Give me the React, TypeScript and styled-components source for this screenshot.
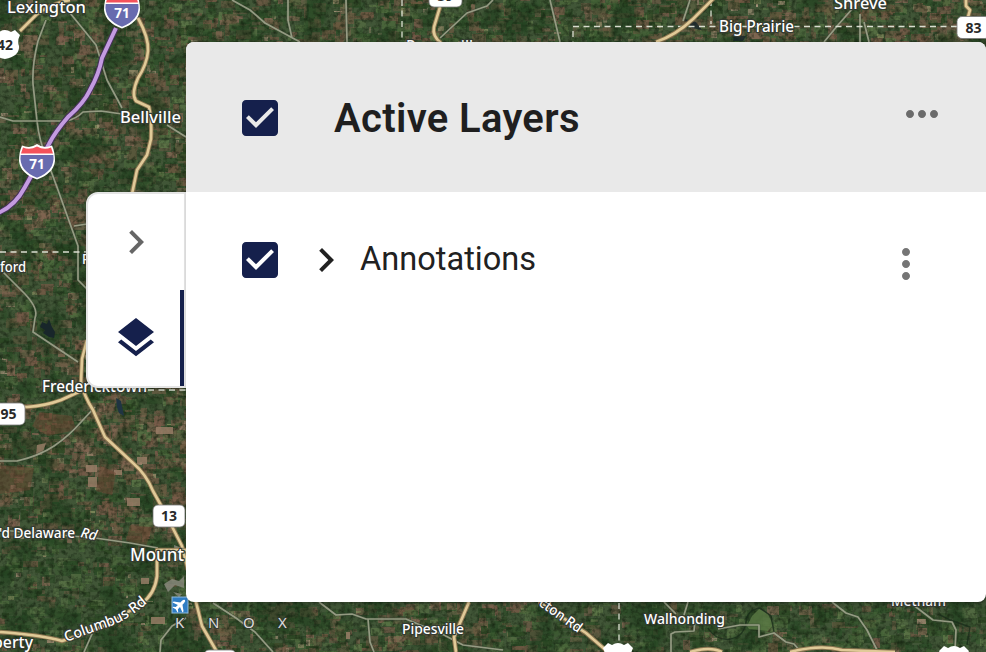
import React from "react";
import styled, { createGlobalStyle } from "styled-components";

const GlobalStyle = createGlobalStyle`
  *, *::before, *::after { box-sizing: border-box; }
  body { margin: 0; overflow: hidden; font-family: Roboto, sans-serif; }
`;

const navy = "#15204c";

const Screen = styled.main`
  position: relative;
  width: 986px;
  height: 652px;
  overflow: hidden;
  background: #30452a;
`;

const MapCanvas = styled.svg`
  position: absolute;
  inset: 0;
  display: block;
  font-family: "Noto Sans", "Open Sans", sans-serif;
`;

const Overlay = styled.div`
  position: relative;
  display: flex;
  align-items: flex-start;
  padding: 42px 0 0 86px;
`;

const Rail = styled.nav`
  display: flex;
  flex-direction: column;
  width: 100px;
  height: 196px;
  margin-top: 150px;
  background: #fff;
  border: 2px solid #e4e4e4;
  border-radius: 12px 0 0 12px;
  box-shadow: 0 1px 3px rgba(0, 0, 0, 0.25);
`;

const RailButton = styled.button<{ $active?: boolean }>`
  display: flex;
  align-items: center;
  justify-content: center;
  height: 96px;
  padding: 0 0 0 ${(p) => (p.$active ? 4 : 0)}px;
  border: 0;
  border-right: ${(p) => (p.$active ? `4px solid ${navy}` : "0")};
  background: transparent;
  color: ${(p) => (p.$active ? navy : "#666")};
`;

const Panel = styled.section`
  width: 800px;
  height: 560px;
  overflow: hidden;
  background: #fff;
  border-radius: 8px;
  box-shadow: 2px 1px 4px rgba(0, 0, 0, 0.35);
`;

const PanelHeader = styled.header`
  display: flex;
  align-items: center;
  height: 150px;
  padding: 0 40px 0 50px;
  background: #e9e9e9;
`;

const Title = styled.h1`
  flex: 1;
  margin: 4px 0 0 50px;
  font-size: 40px;
  line-height: 48px;
  font-weight: 600;
  letter-spacing: 0.33px;
  color: #1f1f1f;
`;

const LayerRow = styled.div`
  display: flex;
  align-items: flex-start;
  padding: 44px 56px 0 50px;
`;

const LayerName = styled.span`
  flex: 1;
  margin-left: 10px;
  font-size: 32.6px;
  line-height: 46px;
  color: #212121;
`;

const IconButton = styled.button<{ $color: string; $left?: number; $shift?: number }>`
  display: flex;
  flex: none;
  padding: 0;
  border: 0;
  background: none;
  color: ${(p) => p.$color};
  margin: ${(p) => p.$shift ?? 0}px 0 0 ${(p) => p.$left ?? 0}px;
`;

const Glyph = styled.svg`
  display: block;
  flex: none;
  width: 48px;
  height: 48px;
  fill: currentColor;
`;

const icons = {
  check:
    "M19 3H5c-1.11 0-2 .9-2 2v14c0 1.1.89 2 2 2h14c1.11 0 2-.9 2-2V5c0-1.1-.89-2-2-2zm-9 14l-5-5 1.41-1.41L10 14.17l7.59-7.59L19 8l-9 9z",
  chevron: "M10 6 8.59 7.41 13.17 12l-4.58 4.59L10 18l6-6z",
  layers:
    "m11.99 18.54-7.37-5.73L3 14.07l9 7 9-7-1.63-1.27-7.38 5.74zM12 16l7.36-5.73L21 9l-9-7-9 7 1.63 1.27L12 16z",
  moreHoriz:
    "M6 10c-1.1 0-2 .9-2 2s.9 2 2 2 2-.9 2-2-.9-2-2-2zm12 0c-1.1 0-2 .9-2 2s.9 2 2 2 2-.9 2-2-.9-2-2-2zm-6 0c-1.1 0-2 .9-2 2s.9 2 2 2 2-.9 2-2-.9-2-2-2z",
  moreVert:
    "M12 8c1.1 0 2-.9 2-2s-.9-2-2-2-2 .9-2 2 .9 2 2 2zm0 2c-1.1 0-2 .9-2 2s.9 2 2 2 2-.9 2-2-.9-2-2-2zm0 6c-1.1 0-2 .9-2 2s.9 2 2 2 2-.9 2-2-.9-2-2-2z",
};

const Icon = ({ name }: { name: keyof typeof icons }) => (
  <Glyph viewBox="0 0 24 24" aria-hidden="true">
    <path d={icons[name]} />
  </Glyph>
);

/* ---------- Satellite terrain ---------- */

type Field = { x: number; y: number; w: number; h: number; fill: string; o: number };

const makeRandom = (seed: number) => () => {
  seed = (seed + 0x6d2b79f5) | 0;
  let t = Math.imul(seed ^ (seed >>> 15), 1 | seed);
  t = (t + Math.imul(t ^ (t >>> 7), 61 | t)) ^ t;
  return ((t ^ (t >>> 14)) >>> 0) / 4294967296;
};

const browns = ["#785a49", "#6c5840", "#836753", "#685b42", "#735844"];
const greens = ["#2f4f2a", "#3a5a30", "#4d6a3c", "#2c4722", "#5c7647", "#2a4825"];
const pales = ["#a38a73", "#968968", "#b59c84", "#848d5d"];

const scatter = (
  seed: number, count: number, x0: number, y0: number, w: number, h: number, brown: number,
): Field[] => {
  const r = makeRandom(seed);
  return Array.from({ length: count }, () => {
    const kind = r();
    const pale = kind < brown * 0.11;
    const set = pale ? pales : kind < brown ? browns : greens;
    const scale = pale ? 0.6 : 1;
    return {
      x: x0 + Math.round(r() * w),
      y: y0 + Math.round(r() * h),
      w: Math.round((3 + r() * 12) * scale),
      h: Math.round((2 + r() * 9) * scale),
      fill: set[Math.floor(r() * set.length)],
      o: 0.4 + r() * 0.45,
    };
  });
};

const fields: Field[] = [
  ...scatter(7, 1500, -6, -6, 192, 400, 0.54),
  ...scatter(19, 600, -6, 395, 192, 140, 0.66),
  ...scatter(33, 420, -6, 535, 192, 117, 0.24),
  ...scatter(51, 460, 186, -6, 400, 50, 0.42),
  ...scatter(64, 480, 586, -6, 400, 50, 0.58),
  ...scatter(82, 460, 186, 600, 350, 52, 0.48),
  ...scatter(97, 500, 536, 600, 450, 52, 0.18),
];

const Terrain = () => (
  <g>
    <rect width="986" height="652" fill="#415637" />
    {fields.map((f, i) => (
      <rect key={i} x={f.x} y={f.y} width={f.w} height={f.h} fill={f.fill} opacity={f.o} />
    ))}
    <rect width="986" height="652" filter="url(#forest)" />
    <rect width="986" height="652" filter="url(#grain)" />
    <g fill="#18262a">
      <path d="M42 322l5 2 2-5 3 8 3 5-1 6-5-1-6-4 2-3-5-3z" />
      <path d="M116 398l5 3 3 15-5-3-2-6z" fill="#203442" />
      <path d="M684 19l12 3 6 8-10-2zM734 36l12 0-3 5-10 0z" opacity=".8" />
    </g>
    <g fill="#9c8069" opacity=".8">
      <path d="M156 427h17v7h-17zM86 465h11v7H86zM127 498h13v8h-13zM88 477h9v10h-9zM37 445l9-2-4 12h-6zM137 457h10v7h-10zM114 470h8v5h-8z" />
      <path d="M174 545l8 3-5 5 6 6-8 2zM164 584l8-5 7 2 5-5v12l-9-3-7 7zM173 592l9 2-3 3z" fill="#8c8c80" />
      <path d="M151 617h14v7h-14zM141 578h8v6h-8zM346 632h4v7h-4z" />
    </g>
    <g fill="#6a4632" opacity=".5">
      <path d="M40 412l32 4 4 14-28 6-16-10zM0 465l34 3-4 22-30 4zM100 465l16 8-4 22-16-4zM130 525l22 2-6 20-20-6z" />
    </g>
    <path d="M747 626l5-10 7-7 9 5 5 11-5 6-19-2z" fill="#5b7a45" opacity=".8" />
    <path
      d="M708 628q8 13 22 11t16-17q1-12 14-14l11 8 3 16M940 615l10 5 20 7-3 18"
      fill="none" stroke="#182b19" strokeWidth="1.4" opacity=".75"
    />
  </g>
);

/* ---------- Roads ---------- */

const localRoads = [
  "M46 20L38 41Q32 65 33 84L37 121Q39 140 47 160L58 190L78 246V280L87 289",
  "M70 13L83 29L96 45L107 80L122 108",
  "M0 117L13 121H66Q76 119 83 112L101 111L122 114M167 125L186 137M74 226L87 224",
  "M3 272L25 294Q39 309 35 318L33 332L78 362",
  "M0 461H17Q39 456 54 446T82 421L95 407",
  "M0 530L95 538L130 543L158 548M186 618L172 626L161 640L160 652M92 634L84 652",
  "M213 603L236 618L255 632L273 652",
  "M319 602L336 615L352 614L366 619H406L444 635L463 645L503 650M368 619L370 642L374 652",
  "M232 0L250 10L265 23L300 42M288 0V20L292 38",
  "M346 0L347 42",
  "M493 0L487 6L467 13L440 38",
  "M550 0L560 42M690 0L683 21M853 8L838 25L824 42M860 14V42M864 22L869 42",
  "M671 652V634L675 632L694 631L695 620M718 629L740 625H759L759 637L774 633L786 642L794 644L801 652",
  "M664 602L676 614M688 602L684 615M832 602L846 613L858 617L867 630L878 652",
  "M912 604L933 620L952 622L956 630L955 650",
];

const highways = [
  "M20 31L37 14Q53 3 70 0",
  "M138 18Q149 38 148 51T138 78Q131 94 136 101L149 107Q152 119 151 139L147 155L137 170L132 194",
  "M87 340L82 359L81 382Q84 396 93 410L105 437L133 463Q146 474 153 491L163 509L182 546L196 602L202 626L217 652",
  "M0 407H27Q45 406 61 400L83 390",
  "M186 550H157V576Q155 594 141 604L112 622Q86 634 62 641Q42 635 0 632",
  "M440 7L434 27Q432 36 441 43",
  "M469 602L454 637L456 652",
  "M539 602L586 633L608 652",
  "M714 -2L693 19Q676 35 656 42M966 0V6L970 10L968 17",
  "M690 652Q710 646 722 652M790 652Q821 644 842 650L895 652",
];

const Roads = () => (
  <g fill="none" strokeLinejoin="round">
    {localRoads.map((d) => (
      <g key={d}>
        <path d={d} stroke="#3d4937" strokeWidth="3" opacity=".5" />
        <path d={d} stroke="#a5a990" strokeWidth="1.7" opacity=".85" />
      </g>
    ))}
    <path
      d="M0 252H86M402 0V42M573 31V42M573 26.5H957M711 0V24M619 603V641M148 390H186"
      stroke="#d9ddcf" strokeWidth="1.3" strokeDasharray="6 4.5"
    />
    {highways.map((d) => (
      <g key={d}>
        <path d={d} stroke="#8a7550" strokeWidth="4.5" />
        <path d={d} stroke="#e0ca98" strokeWidth="2.6" />
      </g>
    ))}
    {[["#46315a", 6], ["#c39be0", 4]].map(([color, width]) => (
      <path
        key={color}
        d="M-2 213Q15 206 25 187L49 144Q55 132 68 117Q84 103 90 90Q99 74 102 58L116 28"
        stroke={color as string}
        strokeWidth={width}
      />
    ))}
  </g>
);

/* ---------- Markers and labels ---------- */

const Interstate = ({ x, y }: { x: number; y: number }) => (
  <g transform={`translate(${x} ${y})`}>
    <path
      d="M-15-15.5Q-7-12 0-17Q7-12 15-15.5Q18-9 18 0C17 9 10 15 0 18.5C-10 15-17 9-18 0Q-18-9-15-15.5Z"
      fill="#fff"
    />
    <path d="M-14-13.5Q-7-10.5 0-14.5Q7-10.5 14-13.5L16-7.5H-16Z" fill="#f4525b" />
    <path d="M-16.3-6H16.3C18 5 11 12.5 0 16.7C-11 12.5-18 5-16.3-6Z" fill="#686baf" />
    <text x="0" y="7.5" fill="#fff" fontSize="13.5" fontWeight="700" textAnchor="middle">71</text>
  </g>
);

const RouteBadge = ({ x, y, w, label }: { x: number; y: number; w: number; label?: string }) => (
  <g>
    <rect x={x} y={y} width={w} height="22" rx="5" fill="#fff" stroke="#777" strokeWidth=".8" />
    <text x={x + w / 2} y={y + 16} fontSize="14" fontWeight="700" textAnchor="middle" fill="#292929">
      {label}
    </text>
  </g>
);

const usShield = "M-10-14L-6-12Q-3-14 0-14Q3-14 6-12L10-14L15-9Q12-3 14 2Q15 12 0 15Q-15 12-14 2Q-12-3-15-9Z";

type Label = { text: string; x: number; y: number; w: number; size: number };
const places: Label[] = [
  { text: "Lexington", x: 7, y: 12.5, w: 79, size: 17 },
  { text: "Bellville", x: 120, y: 122.5, w: 61, size: 16.5 },
  { text: "ford", x: 0, y: 272, w: 26, size: 14 },
  { text: "P", x: 82, y: 264, w: 8, size: 15 },
  { text: "Fredericktown", x: 42, y: 391.5, w: 105, size: 16 },
  { text: "'d Delaware", x: -1, y: 537.5, w: 76, size: 14.5 },
  { text: "Mount", x: 130, y: 561, w: 54, size: 17.5 },
  { text: "perty", x: -7, y: 648, w: 40, size: 15.5 },
  { text: "Pipesville", x: 402, y: 634, w: 62, size: 15 },
  { text: "Walhonding", x: 644, y: 624, w: 81, size: 15 },
  { text: "Metham", x: 891, y: 606, w: 55, size: 14 },
  { text: "Big Prairie", x: 719, y: 31.5, w: 75, size: 16 },
  { text: "Shreve", x: 834, y: 8.5, w: 53, size: 16 },
  { text: "Perrysville", x: 406, y: 51.5, w: 76, size: 16 },
];

const MapLabels = () => (
  <g fill="#fff" stroke="#343a31" strokeWidth="2.4" strokeLinejoin="round" paintOrder="stroke" fontWeight="500">
    {places.map((p) => (
      <text key={p.text} x={p.x} y={p.y} fontSize={p.size} textLength={p.w} lengthAdjust="spacingAndGlyphs">
        {p.text}
      </text>
    ))}
    <text fontSize="14" transform="translate(80 537) rotate(12)" fontStyle="italic">Rd</text>
    <text fontSize="14.5" textLength="91" lengthAdjust="spacingAndGlyphs">
      <textPath href="#columbus">Columbus Rd</textPath>
    </text>
    <text fontSize="14" transform="translate(538 605) rotate(35)" textLength="49" lengthAdjust="spacingAndGlyphs">cton Rd</text>
    <g fill="#dcdcdc" fontSize="15" strokeWidth="1.8" fontWeight="400">
      <text x="175" y="628">K</text>
      <text x="208" y="628">N</text>
      <text x="243" y="628">O</text>
      <text x="278" y="628">X</text>
    </g>
  </g>
);

const SatelliteMap = () => (
  <MapCanvas width="986" height="652" viewBox="0 0 986 652" aria-label="Satellite map">
    <defs>
      <filter id="forest" x="0" y="0" width="100%" height="100%" colorInterpolationFilters="sRGB">
        <feTurbulence type="fractalNoise" baseFrequency="0.03" numOctaves="5" seed="4" />
        <feColorMatrix values="0 0 0 0 .13  0 0 0 0 .25  0 0 0 0 .12  6 0 0 0 -3.1" />
        <feComponentTransfer><feFuncA type="linear" slope="0.65" /></feComponentTransfer>
      </filter>
      <filter id="grain" x="0" y="0" width="100%" height="100%" colorInterpolationFilters="sRGB">
        <feTurbulence type="fractalNoise" baseFrequency="0.22" numOctaves="3" seed="8" />
        <feColorMatrix values="0 0 0 0 .08  0 0 0 0 .13  0 0 0 0 .06  1.6 0 0 0 -0.65" />
      </filter>
      <path id="columbus" d="M66 642Q90 633 108 627T146 604" />
    </defs>
    <Terrain />
    <Roads />
    <Interstate x={122} y={10} />
    <Interstate x={37} y={161} />
    <path d={usShield} transform="translate(5 44)" fill="#fff" />
    <text x="-3" y="49.5" fontSize="14" fontWeight="700" fill="#292929">42</text>
    <RouteBadge x={-8} y={403} w={33} label="95" />
    <RouteBadge x={153} y={505} w={32} label="13" />
    <RouteBadge x={957} y={16.5} w={33} label="83" />
    <RouteBadge x={429} y={-15} w={33} label="39" />
    <RouteBadge x={204} y={650} w={32} />
    <path d={usShield} transform="translate(618 657)" fill="#fff" />
    <path d={usShield} transform="translate(954 660)" fill="#fff" />
    <rect x="172" y="597" width="16" height="16" fill="#2f7dc3" stroke="#91bbdd" />
    <path
      d="M0-7Q1.5-7 1.5-4V-2L7 2V3.5L1.5 1.5V4.5L3.5 6V7L0 6L-3.5 7V6L-1.5 4.5V1.5L-7 3.5V2L-1.5-2V-4Q-1.5-7 0-7Z"
      transform="translate(180 605) rotate(45)"
      fill="#fff"
    />
    <MapLabels />
  </MapCanvas>
);

export default function App() {
  return (
    <>
      <GlobalStyle />
      <Screen>
        <SatelliteMap />
        <Overlay>
          <Rail>
            <RailButton aria-label="Collapse panel"><Icon name="chevron" /></RailButton>
            <RailButton $active aria-label="Layers"><Icon name="layers" /></RailButton>
          </Rail>
          <Panel>
            <PanelHeader>
              <IconButton $color={navy} $shift={2} aria-label="Toggle all layers"><Icon name="check" /></IconButton>
              <Title>Active Layers</Title>
              <IconButton $color="#6b6b6b" $shift={-6} aria-label="Layer options"><Icon name="moreHoriz" /></IconButton>
            </PanelHeader>
            <LayerRow>
              <IconButton $color={navy} aria-label="Toggle annotations"><Icon name="check" /></IconButton>
              <IconButton $color="#212121" $left={18} aria-label="Expand annotations"><Icon name="chevron" /></IconButton>
              <LayerName>Annotations</LayerName>
              <IconButton $color="#757575" $shift={4} aria-label="Annotation options"><Icon name="moreVert" /></IconButton>
            </LayerRow>
          </Panel>
        </Overlay>
      </Screen>
    </>
  );
}
